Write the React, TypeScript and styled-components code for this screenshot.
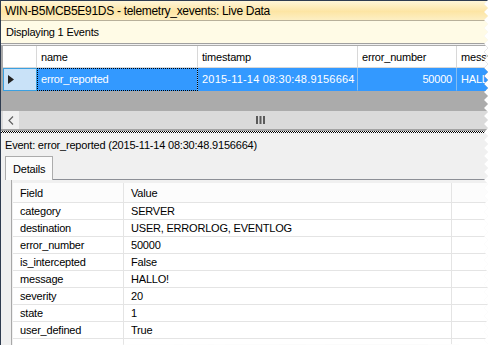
import React from 'react';
import styled, { createGlobalStyle } from 'styled-components';

const Global = createGlobalStyle`
  html, body { margin: 0; padding: 0; background: #ffffff; }
  body {
    font-family: "Segoe UI", "Liberation Sans", Arial, sans-serif;
    font-size: 11px;
    color: #000;
  }
  #root { width: 489px; height: 345px; }
`;

const zigzag = (() => {
  const pts: string[] = ['0 0'];
  let i = 0;
  for (let y = 0; y <= 345; y += 4) {
    pts.push(`${i % 2 === 0 ? 488 : 484}px ${y}px`);
    i++;
  }
  pts.push('0 345px');
  return `polygon(${pts.join(', ')})`;
})();

const Torn = styled.div`
  width: 489px;
  height: 345px;
`;

const Window = styled.div`
  width: 489px;
  height: 345px;
  box-sizing: border-box;
  overflow: hidden;
  display: flex;
  flex-direction: column;
  background: #f0f0f0;
  border-top: 1px solid #2f3c50;
  border-left: 1px solid #2f3c50;
  letter-spacing: -0.2px;
`;

const TitleBar = styled.div`
  height: 19px;
  flex: none;
  display: flex;
  align-items: center;
  padding-left: 4px;
  font-size: 12px;
  letter-spacing: -0.3px;
  background: linear-gradient(#fff6d8 0%, #fde5a4 55%, #fdefc4 100%);
  border-bottom: 1px solid #b8b09a;
  white-space: nowrap;
`;

const InfoBar = styled.div`
  height: 22px;
  flex: none;
  display: flex;
  align-items: center;
  padding-left: 5px;
  background: #fffbe6;
  border-bottom: 1px solid #a0a0a0;
  white-space: nowrap;
`;

const GridArea = styled.div`
  height: 67px;
  flex: none;
  box-sizing: border-box;
  padding: 1px 0 0 2px;
  background: #ababab;
  border-top: 1px solid #f0f0f0;
  display: flex;
  flex-direction: column;
`;

const GridRow = styled.div<{ $h: number }>`
  display: flex;
  height: ${(p) => p.$h}px;
  flex: none;
`;

const HeadCell = styled.div<{ $w: number }>`
  width: ${(p) => p.$w}px;
  flex: none;
  box-sizing: border-box;
  background: #ffffff;
  border-right: 1px solid #d8d8d8;
  border-bottom: 1px solid #d8d8d8;
  display: flex;
  align-items: center;
  padding-left: 4px;
  white-space: nowrap;
  overflow: hidden;
`;

const RowHeader = styled.div`
  width: 34px;
  flex: none;
  box-sizing: border-box;
  background: #c9e2f8;
  border: 1px solid #3ba0e0;
  display: flex;
  align-items: center;
  padding-left: 4px;
`;

const DataCell = styled.div<{ $w: number; $right?: boolean; $focus?: boolean; $spaced?: boolean }>`
  width: ${(p) => p.$w}px;
  flex: none;
  box-sizing: border-box;
  background: #3399ff;
  color: #ffffff;
  display: flex;
  align-items: center;
  justify-content: ${(p) => (p.$right ? 'flex-end' : 'flex-start')};
  padding: 0 4px;
  border-right: 1px solid #86bdf0;
  border-bottom: 1px solid #3399ff;
  white-space: nowrap;
  overflow: hidden;
  letter-spacing: ${(p) => (p.$spaced ? '0.2px' : '-0.2px')};
  ${(p) => (p.$focus ? 'outline: 1px dotted #000; outline-offset: -1px;' : '')}
`;

const Scrollbar = styled.div`
  height: 18px;
  flex: none;
  display: flex;
  background: #dadada;
  padding-left: 2px;
  border-bottom: 2px solid #a3a3a3;
`;

const ScrollButton = styled.div`
  width: 16px;
  flex: none;
  background: #f0f0f0;
  display: flex;
  align-items: center;
  justify-content: center;
`;

const ScrollThumb = styled.div`
  flex: 1;
  display: flex;
  align-items: center;
  justify-content: center;
  padding-left: 12px;
`;

const Splitter = styled.div`
  height: 2px;
  flex: none;
  background: repeating-conic-gradient(#000 0 25%, #fff 0 50%) 0 0 / 2px 2px;
`;

const LowerPanel = styled.div`
  flex: 1;
  display: flex;
  flex-direction: column;
  padding: 5px 0 0 4px;
  background: #f0f0f0;
`;

const EventLabel = styled.div`
  height: 14px;
  display: flex;
  align-items: center;
  white-space: nowrap;
`;

const TabStrip = styled.div`
  margin-top: 4px;
  display: flex;
  height: 24px;
  flex: none;
`;

const Tab = styled.div`
  width: 48px;
  box-sizing: border-box;
  background: #fbfbfb;
  border: 1px solid #acacac;
  border-bottom: none;
  display: flex;
  align-items: center;
  padding: 1px 0 0 7px;
`;

const TabLine = styled.div`
  flex: 1;
  border-bottom: 1px solid #8c8f96;
`;

const TabPage = styled.div`
  flex: 1;
  display: flex;
  flex-direction: column;
  margin-left: 6px;
  padding: 3px 0 0 1px;
  border-left: 1px solid #a8a8a8;
`;

const PropGrid = styled.div`
  flex: 1;
  background: #ffffff;
  display: grid;
  grid-template-columns: 111px 328px 1fr;
  grid-template-rows: 20px;
  grid-auto-rows: 17px;
  align-content: start;
`;

const PropCell = styled.div<{ $head?: boolean }>`
  box-sizing: border-box;
  display: flex;
  align-items: center;
  padding-left: 7px;
  border-right: 1px solid #e4e4e4;
  border-bottom: 1px solid #e4e4e4;
  background: ${(p) => (p.$head ? '#fcfcfc' : '#ffffff')};
  white-space: nowrap;
  overflow: hidden;
`;

const columns = [
  { label: '', w: 34 },
  { label: 'name', w: 161 },
  { label: 'timestamp', w: 160 },
  { label: 'error_number', w: 99 },
  { label: 'message', w: 80 },
];

const props: [string, string][] = [
  ['category', 'SERVER'],
  ['destination', 'USER, ERRORLOG, EVENTLOG'],
  ['error_number', '50000'],
  ['is_intercepted', 'False'],
  ['message', 'HALLO!'],
  ['severity', '20'],
  ['state', '1'],
  ['user_defined', 'True'],
  ['', ''],
];

export default function App() {
  return (
    <>
      <Global />
      <Torn style={{ clipPath: zigzag }}>
        <Window>
          <TitleBar>WIN-B5MCB5E91DS - telemetry_xevents: Live Data</TitleBar>
          <InfoBar>Displaying 1 Events</InfoBar>
          <GridArea>
            <GridRow $h={22}>
              {columns.map((c, i) => (
                <HeadCell key={i} $w={c.w}>
                  {c.label}
                </HeadCell>
              ))}
            </GridRow>
            <GridRow $h={23}>
              <RowHeader>
                <svg width="6" height="9" viewBox="0 0 6 9">
                  <path d="M0 0 L6 4.5 L0 9 Z" fill="#222" />
                </svg>
              </RowHeader>
              <DataCell $w={161} $focus>
                error_reported
              </DataCell>
              <DataCell $w={160} $spaced>
                2015-11-14 08:30:48.9156664
              </DataCell>
              <DataCell $w={99} $right>
                50000
              </DataCell>
              <DataCell $w={80}>HALLO!</DataCell>
            </GridRow>
          </GridArea>
          <Scrollbar>
            <ScrollButton>
              <svg width="6" height="9" viewBox="0 0 6 9">
                <path d="M5 0.5 L1 4.5 L5 8.5" fill="none" stroke="#606060" strokeWidth="1.2" />
              </svg>
            </ScrollButton>
            <ScrollThumb>
              <svg width="9" height="8" viewBox="0 0 9 8">
                <rect x="0" y="0" width="2" height="8" fill="#5a5a5a" />
                <rect x="3.5" y="0" width="2" height="8" fill="#5a5a5a" />
                <rect x="7" y="0" width="2" height="8" fill="#5a5a5a" />
              </svg>
            </ScrollThumb>
          </Scrollbar>
          <Splitter />
          <LowerPanel>
            <EventLabel>Event: error_reported (2015-11-14 08:30:48.9156664)</EventLabel>
            <TabStrip>
              <Tab>Details</Tab>
              <TabLine />
            </TabStrip>
            <TabPage>
              <PropGrid>
                <PropCell $head>Field</PropCell>
                <PropCell $head>Value</PropCell>
                <PropCell $head />
                {props.map(([f, v], i) => (
                  <React.Fragment key={i}>
                    <PropCell>{f}</PropCell>
                    <PropCell>{v}</PropCell>
                    <PropCell />
                  </React.Fragment>
                ))}
              </PropGrid>
            </TabPage>
          </LowerPanel>
        </Window>
      </Torn>
    </>
  );
}
